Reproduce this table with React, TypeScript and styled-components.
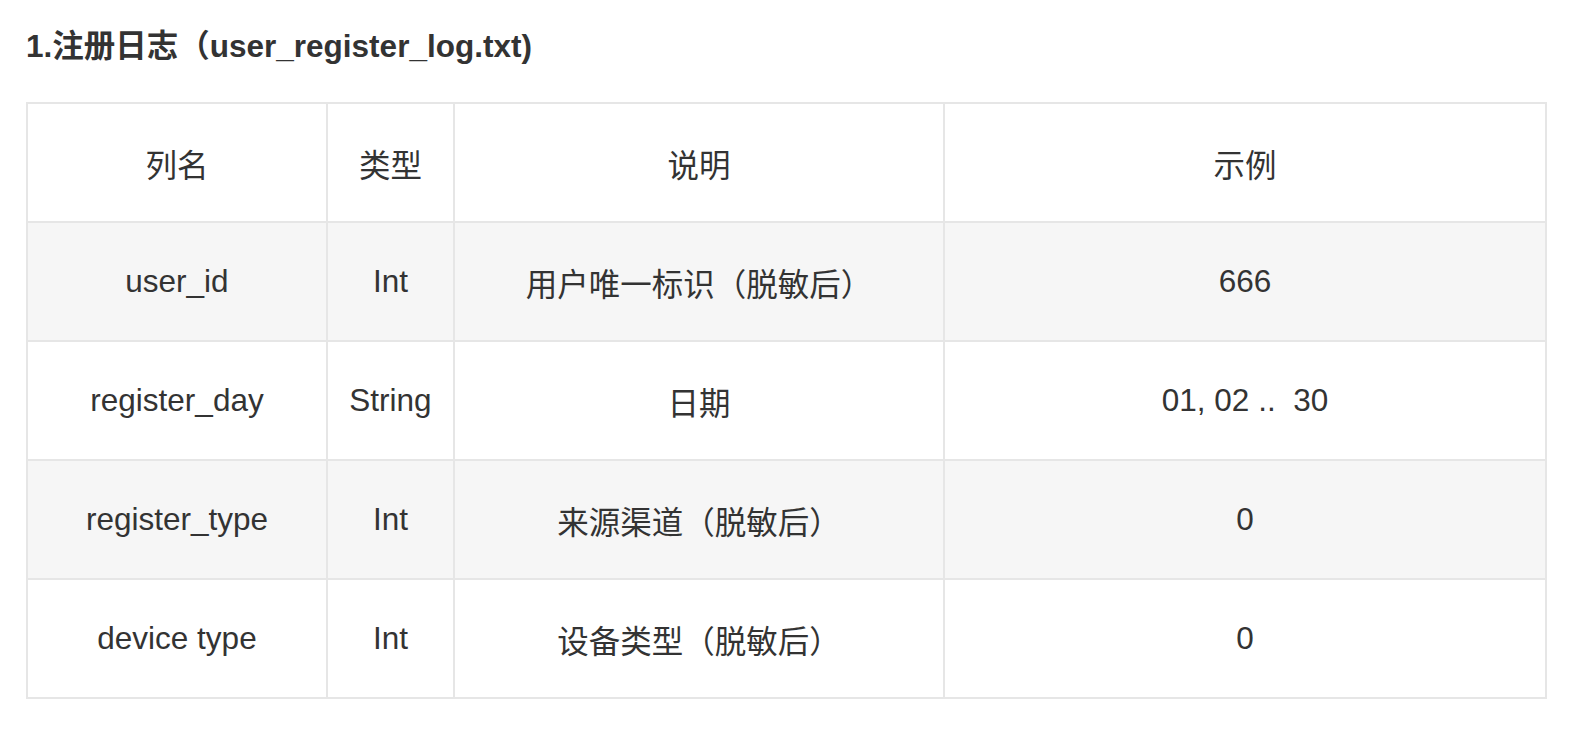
import React from "react";
import styled, { createGlobalStyle } from "styled-components";

const Global = createGlobalStyle`
  html, body { margin: 0; padding: 0; background: #ffffff; }
  body { font-family: "Liberation Sans", Arial, "Noto Sans CJK SC", sans-serif; color: #333333; }
`;

const Page = styled.div`
  padding: 24px 29px 0 26px;
`;

const Title = styled.h3`
  margin: 0;
  font-size: 31.5px;
  line-height: 45px;
  font-weight: 700;
  color: #333333;
  font-family: "Liberation Sans", Arial, "Noto Sans CJK SC", sans-serif;
`;

const Table = styled.table`
  margin-top: 33px;
  width: 1519px;
  table-layout: fixed;
  border-collapse: collapse;
  border: 2px solid #e6e6e6;
`;

const Row = styled.tr<{ $striped?: boolean }>`
  background: ${(p) => (p.$striped ? "#f6f6f6" : "#ffffff")};
`;

const Cell = styled.td`
  height: 117px;
  padding: 0 8px;
  border: 2px solid #e6e6e6;
  text-align: center;
  vertical-align: middle;
  font-size: 31.5px;
  font-weight: 400;
  color: #333333;
  white-space: pre;
`;

const HeadCell = styled(Cell).attrs({ as: "th" })`
  font-weight: 400;
`;

const columns = ["列名", "类型", "说明", "示例"];
const widths = [300, 127, 490, 602];

const rows: string[][] = [
  ["user_id", "Int", "用户唯一标识（脱敏后）", "666"],
  ["register_day", "String", "日期", "01, 02 ..  30"],
  ["register_type", "Int", "来源渠道（脱敏后）", "0"],
  ["device type", "Int", "设备类型（脱敏后）", "0"],
];

export default function App() {
  return (
    <>
      <Global />
      <Page>
        <Title>1.注册日志（user_register_log.txt)</Title>
        <Table>
          <colgroup>
            {widths.map((w, i) => (
              <col key={i} style={{ width: w }} />
            ))}
          </colgroup>
          <thead>
            <Row>
              {columns.map((c) => (
                <HeadCell key={c}>{c}</HeadCell>
              ))}
            </Row>
          </thead>
          <tbody>
            {rows.map((r, i) => (
              <Row key={i} $striped={i % 2 === 0}>
                {r.map((v, j) => (
                  <Cell key={j}>{v}</Cell>
                ))}
              </Row>
            ))}
          </tbody>
        </Table>
      </Page>
    </>
  );
}
